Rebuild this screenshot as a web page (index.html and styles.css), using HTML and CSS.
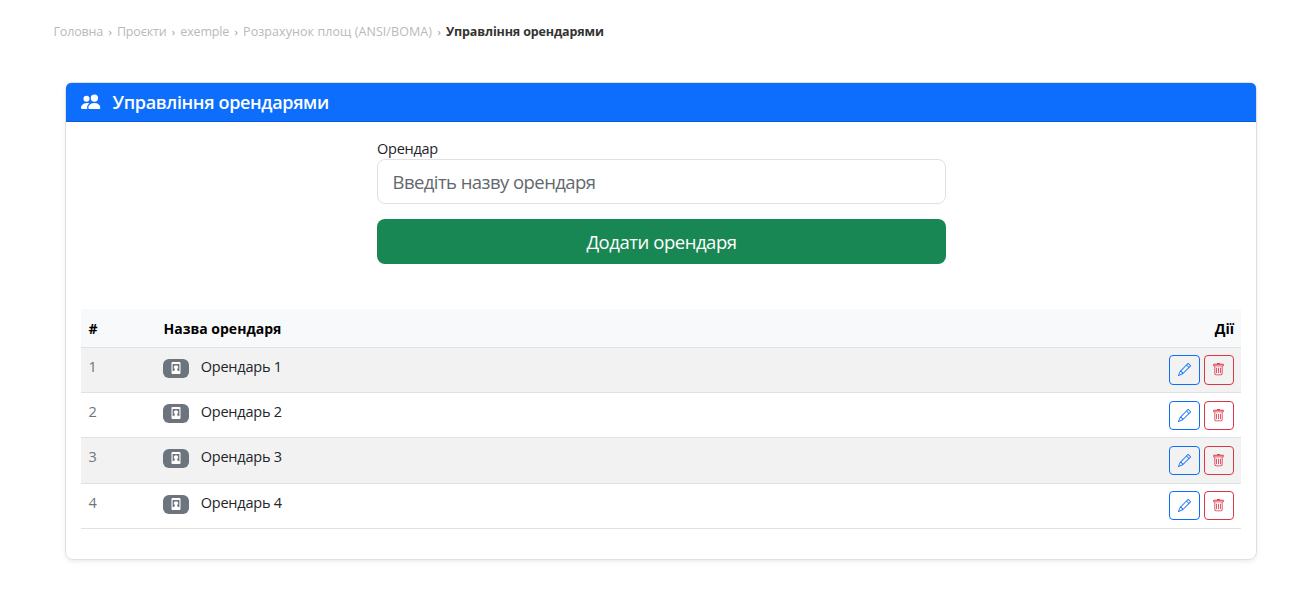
FILE: index.html
```html
<!DOCTYPE html>
<html lang="uk">
<head>
<meta charset="utf-8">
<title>Управління орендарями</title>
<link rel="stylesheet" href="styles.css">
</head>
<body>
<svg class="sprite" width="0" height="0">
<symbol id="people" viewBox="0 0 16 16"><path d="M7 14s-1 0-1-1 1-4 5-4 5 3 5 4-1 1-1 1zm4-6a3 3 0 1 0 0-6 3 3 0 0 0 0 6m-5.784 6A2.24 2.24 0 0 1 5 13c0-1.355.68-2.75 1.936-3.72A6.3 6.3 0 0 0 5 9c-4 0-5 3-5 4s1 1 1 1zM4.5 8a2.5 2.5 0 1 0 0-5 2.5 2.5 0 0 0 0 5"/></symbol>
<symbol id="badge" viewBox="0 0 16 16"><path fill-rule="evenodd" d="M3.300 0h9.400A1.300 1.300 0 0 1 14 1.300v13.400a1.300 1.300 0 0 1-1.300 1.300H3.300A1.300 1.300 0 0 1 2 14.700V1.300A1.300 1.300 0 0 1 3.300 0M3.500 2.800v10c.8-1 2-1.600 3-1.800V9.600A3 3 0 0 1 5.200 7c0-1.700 1.200-2.700 2.800-2.700s2.800 1 2.800 2.700a3 3 0 0 1-1.300 2.600V11c1 .2 2.200.8 3 1.800v-10z"/></symbol>
<symbol id="pencil" viewBox="0 0 16 16"><path d="M12.146.146a.5.5 0 0 1 .708 0l3 3a.5.5 0 0 1 0 .708l-10 10a.5.5 0 0 1-.168.11l-5 2a.5.5 0 0 1-.65-.65l2-5a.5.5 0 0 1 .11-.168zM11.207 2.5 13.5 4.793 14.793 3.5 12.5 1.207zm1.586 3L10.5 3.207 4 9.707V10h.5a.5.5 0 0 1 .5.5v.5h.5a.5.5 0 0 1 .5.5v.5h.293zm-9.761 5.175-.106.106-1.528 3.821 3.821-1.528.106-.106A.5.5 0 0 1 5 12.5V12h-.5a.5.5 0 0 1-.5-.5V11h-.5a.5.5 0 0 1-.468-.325"/></symbol>
<symbol id="trash" viewBox="0 0 16 16"><path d="M5.5 5.5A.5.5 0 0 1 6 6v6a.5.5 0 0 1-1 0V6a.5.5 0 0 1 .5-.5m2.5 0a.5.5 0 0 1 .5.5v6a.5.5 0 0 1-1 0V6a.5.5 0 0 1 .5-.5m3 .5a.5.5 0 0 0-1 0v6a.5.5 0 0 0 1 0z"/><path d="M14.5 3a1 1 0 0 1-1 1H13v9a2 2 0 0 1-2 2H5a2 2 0 0 1-2-2V4h-.5a1 1 0 0 1-1-1V2a1 1 0 0 1 1-1H6a1 1 0 0 1 1-1h2a1 1 0 0 1 1 1h3.500a1 1 0 0 1 1 1zM4.118 4 4 4.059V13a1 1 0 0 0 1 1h6a1 1 0 0 0 1-1V4.059L11.882 4zM2.500 3h11V2h-11z"/></symbol>
</svg>
<nav class="crumbs"><span>Головна</span><i>›</i><span>Проєкти</span><i>›</i><span>exemple</span><i>›</i><span>Розрахунок площ (ANSI/BOMA)</span><i>›</i><b>Управління орендарями</b></nav>
<main class="card">
<header class="card-header"><svg><use href="#people"/></svg><h1>Управління орендарями</h1></header>
<form class="tenant-form">
<label for="tenant">Орендар</label>
<input id="tenant" type="text" placeholder="Введіть назву орендаря">
<button type="button">Додати орендаря</button>
</form>
<table class="tenants">
<thead><tr><th class="num">#</th><th>Назва орендаря</th><th class="actions">Дії</th></tr></thead>
<tbody>
<tr><td class="num">1</td><td><div class="name"><span class="badge"><svg><use href="#badge"/></svg></span><span>Орендарь 1</span></div></td><td><div class="buttons"><button class="edit" type="button"><svg><use href="#pencil"/></svg></button><button class="delete" type="button"><svg><use href="#trash"/></svg></button></div></td></tr>
<tr><td class="num">2</td><td><div class="name"><span class="badge"><svg><use href="#badge"/></svg></span><span>Орендарь 2</span></div></td><td><div class="buttons"><button class="edit" type="button"><svg><use href="#pencil"/></svg></button><button class="delete" type="button"><svg><use href="#trash"/></svg></button></div></td></tr>
<tr><td class="num">3</td><td><div class="name"><span class="badge"><svg><use href="#badge"/></svg></span><span>Орендарь 3</span></div></td><td><div class="buttons"><button class="edit" type="button"><svg><use href="#pencil"/></svg></button><button class="delete" type="button"><svg><use href="#trash"/></svg></button></div></td></tr>
<tr><td class="num">4</td><td><div class="name"><span class="badge"><svg><use href="#badge"/></svg></span><span>Орендарь 4</span></div></td><td><div class="buttons"><button class="edit" type="button"><svg><use href="#pencil"/></svg></button><button class="delete" type="button"><svg><use href="#trash"/></svg></button></div></td></tr>
</tbody>
</table>
</main>
</body>
</html>
```

FILE: styles.css
```css
* { box-sizing: border-box; }
body { margin: 0; height: 594px; overflow: hidden; background: #fff; color: #212529; font: 15px/22px "Segoe UI", "Open Sans", "Noto Sans", sans-serif; }
svg { fill: currentColor; display: block; }
.sprite { position: absolute; }
.crumbs { display: flex; align-items: center; height: 20px; margin: 22px 0 0 53.500px; color: #b9b9b9; font-size: 12.5px; line-height: 20px; letter-spacing: -.17px; white-space: nowrap; }
.crumbs span:nth-of-type(4) { letter-spacing: .07px; }
.crumbs i { width: 13.900px; text-align: center; font-style: normal; font-size: 11px; color: #999; }
.crumbs b { color: #333; letter-spacing: -.14px; }
.card { width: 1192px; height: 478px; margin: 40px 0 0 65px; border: 1px solid #dfe0e1; border-radius: 8px; box-shadow: 0 2px 4px rgba(0,0,0,.075); }
.card-header { display: flex; align-items: center; height: 39px; padding: 0 15px; gap: 12px; background: #0d6efd; border-bottom: 1px solid #0b5ed7; border-radius: 5px 5px 0 0; color: #fff; }
.card-header svg { width: 19.500px; height: 19.500px; }
.card-header h1 { margin: 0; font-size: 18px; font-weight: 600; line-height: 24px; letter-spacing: -.34px; }
.tenant-form { width: 569px; margin: 16px auto 0 311px; }
.tenant-form label { display: block; height: 21px; line-height: 21px; font-size: 14.500px; letter-spacing: -.25px; }
.tenant-form input { display: block; width: 100%; height: 45px; padding: 0 14.500px; border: 1px solid #dee2e6; border-radius: 8px; font: 18.500px "Segoe UI", "Open Sans", "Noto Sans", sans-serif; letter-spacing: -.56px; background: #fff; }
.tenant-form input::placeholder { color: #63686d; opacity: 1; }
.tenant-form button { display: block; width: 100%; height: 45px; margin-top: 15px; padding: 0; border: 0; border-radius: 8px; background: #198754; color: #fff; font: 18.500px "Segoe UI", "Open Sans", "Noto Sans", sans-serif; letter-spacing: -.45px; }
.tenants { width: 1160px; margin: 45px 0 0 15px; border-collapse: separate; border-spacing: 0; table-layout: fixed; }
.tenants th { height: 39px; padding: 1px 7px 0 7.500px; background: #f8f9fa; color: #000; text-align: left; font-size: 14px; font-weight: 700; border-bottom: 1px solid #dee2e6; }
.tenants .num { width: 75px; }
.tenants .actions { width: 150px; text-align: right; }
.tenants td { height: 45px; padding: 7.500px 7.500px 7px; vertical-align: top; border-bottom: 1px solid #dee2e6; }
.tenants tr:nth-child(3) td { height: 46px; }
.tenants td.num { color: #6c757d; font-size: 14.500px; }
.tenants tbody tr:nth-child(odd) td { background: #f2f2f2; }
.name { display: flex; align-items: center; gap: 12px; margin-left: -.8px; font-size: 14.500px; letter-spacing: -.22px; }
.badge { display: flex; align-items: center; justify-content: center; width: 26px; height: 19px; margin-top: 3px; border-radius: 6px; background: #6c757d; color: #fff; }
.badge svg { width: 12px; height: 12px; }
.buttons { display: flex; justify-content: flex-end; gap: 4px; }
.buttons button { display: flex; align-items: center; justify-content: center; width: 30px; height: 29.500px; padding: 0; border: 1px solid; border-radius: 4px; background: transparent; }
.buttons .edit { width: 31px; color: #0d6efd; }
.buttons .delete { color: #dc3545; }
.buttons svg { width: 13px; height: 13px; }
.tenants tr:nth-child(4) .buttons { margin-top: -.6px; }
.tenants tr:nth-child(1) .buttons { margin-top: -.4px; }
```
